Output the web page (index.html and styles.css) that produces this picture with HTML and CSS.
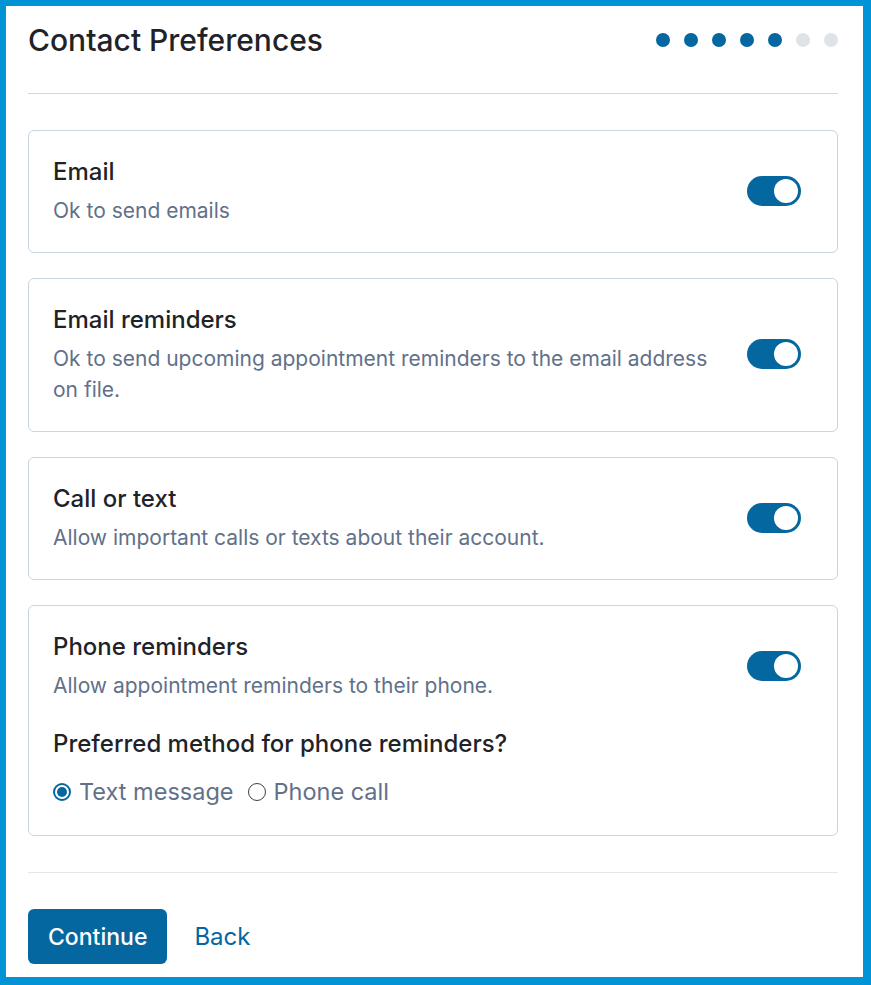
FILE: index.html
```html
<!DOCTYPE html>
<html lang="en">
<head>
    <meta charset="UTF-8">
    <meta name="viewport" content="width=device-width, initial-scale=1.0">
    <title>Contact Preferences</title>
    <link rel="stylesheet" href="styles.css">
</head>
<body>
    <div class="page">
        <div class="header">
            <h1>Contact Preferences</h1>
            <div class="steps">
                <span class="dot done"></span>
                <span class="dot done"></span>
                <span class="dot done"></span>
                <span class="dot done"></span>
                <span class="dot done"></span>
                <span class="dot"></span>
                <span class="dot"></span>
            </div>
        </div>

        <div class="pref-list">
            <div class="pref-card">
                <div class="pref-row">
                    <div class="pref-text">
                        <div class="pref-title">Email</div>
                        <div class="pref-desc">Ok to send emails</div>
                    </div>
                    <label class="toggle"><input type="checkbox" checked><span class="slider"></span></label>
                </div>
            </div>

            <div class="pref-card">
                <div class="pref-row">
                    <div class="pref-text">
                        <div class="pref-title">Email reminders</div>
                        <div class="pref-desc">Ok to send upcoming appointment reminders to the email address on file.</div>
                    </div>
                    <label class="toggle"><input type="checkbox" checked><span class="slider"></span></label>
                </div>
            </div>

            <div class="pref-card">
                <div class="pref-row">
                    <div class="pref-text">
                        <div class="pref-title">Call or text</div>
                        <div class="pref-desc">Allow important calls or texts about their account.</div>
                    </div>
                    <label class="toggle"><input type="checkbox" checked><span class="slider"></span></label>
                </div>
            </div>

            <div class="pref-card">
                <div class="pref-row">
                    <div class="pref-text">
                        <div class="pref-title">Phone reminders</div>
                        <div class="pref-desc">Allow appointment reminders to their phone.</div>
                    </div>
                    <label class="toggle"><input type="checkbox" checked><span class="slider"></span></label>
                </div>
                <div class="method">
                    <div class="method-title">Preferred method for phone reminders?</div>
                    <div class="radios">
                        <label class="radio"><input type="radio" name="method" checked><span class="mark"></span>Text message</label>
                        <label class="radio"><input type="radio" name="method"><span class="mark"></span>Phone call</label>
                    </div>
                </div>
            </div>
        </div>

        <div class="footer">
            <button class="btn-primary">Continue</button>
            <a href="#" class="btn-link">Back</a>
        </div>
    </div>
</body>
</html>
```

FILE: styles.css
```css
* {
    box-sizing: border-box;
}
html, body {
    margin: 0;
    padding: 0;
}
body {
    font-family: Inter, "Noto Sans", sans-serif;
    color: #1f2328;
    background-color: #fff;
}
.page {
    min-height: 100vh;
    border-style: solid;
    border-color: #0093d6;
    border-width: 6px 8px 8px 6px;
    padding: 17px 25px 12px 22px;
}
.header {
    display: flex;
    align-items: center;
    justify-content: space-between;
    padding-bottom: 36px;
    border-bottom: 1px solid #cfd7e0;
}
h1 {
    margin: 0;
    font-size: 30px;
    line-height: 34px;
    font-weight: 500;
    color: #1f2328;
}
.steps {
    display: flex;
    gap: 14px;
}
.dot {
    width: 14px;
    height: 14px;
    border-radius: 50%;
    background-color: #dfe2e7;
}
.dot.done {
    background-color: #0467a0;
}
.pref-list {
    display: flex;
    flex-direction: column;
    gap: 25px;
    margin-top: 36px;
}
.pref-card {
    border: 1px solid #cbd5e0;
    border-radius: 6px;
    padding: 24px 24px 26px;
}
.pref-row {
    display: flex;
    align-items: center;
}
.pref-text {
    flex: 1;
}
.pref-title {
    font-size: 24px;
    line-height: 34px;
    font-weight: 500;
    margin-bottom: 6px;
}
.pref-desc {
    font-size: 21px;
    line-height: 31px;
    color: #617189;
}
.toggle {
    position: relative;
    display: inline-block;
    width: 54px;
    height: 30px;
    margin: 0 12px 0 32px;
    flex-shrink: 0;
}
.toggle input {
    opacity: 0;
    width: 0;
    height: 0;
}
.slider {
    position: absolute;
    inset: 0;
    border-radius: 15px;
    background-color: #cbd5e0;
    cursor: pointer;
}
.slider::before {
    content: "";
    position: absolute;
    top: 3px;
    left: 3px;
    width: 24px;
    height: 24px;
    border-radius: 50%;
    background-color: #fff;
}
.toggle input:checked + .slider {
    background-color: #0467a0;
}
.toggle input:checked + .slider::before {
    left: 27px;
}
.method {
    margin-top: 26px;
}
.method-title {
    font-size: 24px;
    line-height: 34px;
    font-weight: 500;
}
.radios {
    display: flex;
    gap: 14px;
    margin-top: 14px;
}
.radio {
    display: flex;
    align-items: center;
    font-size: 23.5px;
    line-height: 34px;
    color: #617189;
    cursor: pointer;
}
.radio input {
    display: none;
}
.mark {
    width: 18px;
    height: 18px;
    border-radius: 50%;
    border: 1.5px solid #3b3f45;
    margin-right: 8px;
    position: relative;
}
.radio input:checked + .mark {
    border: 2px solid #0467a0;
}
.radio input:checked + .mark::after {
    content: "";
    position: absolute;
    top: 2px;
    left: 2px;
    width: 10px;
    height: 10px;
    border-radius: 50%;
    background-color: #0467a0;
}
.footer {
    display: flex;
    align-items: center;
    gap: 27px;
    margin-top: 36px;
    padding-top: 36px;
    border-top: 1px solid #e3e7ec;
}
.btn-primary {
    background-color: #0467a0;
    color: #fff;
    border: none;
    border-radius: 6px;
    height: 55px;
    padding: 0 20px;
    font-family: inherit;
    font-size: 23px;
    font-weight: 500;
    cursor: pointer;
}
.btn-link {
    color: #0467a0;
    text-decoration: none;
    font-size: 24px;
    font-weight: 400;
}
```
